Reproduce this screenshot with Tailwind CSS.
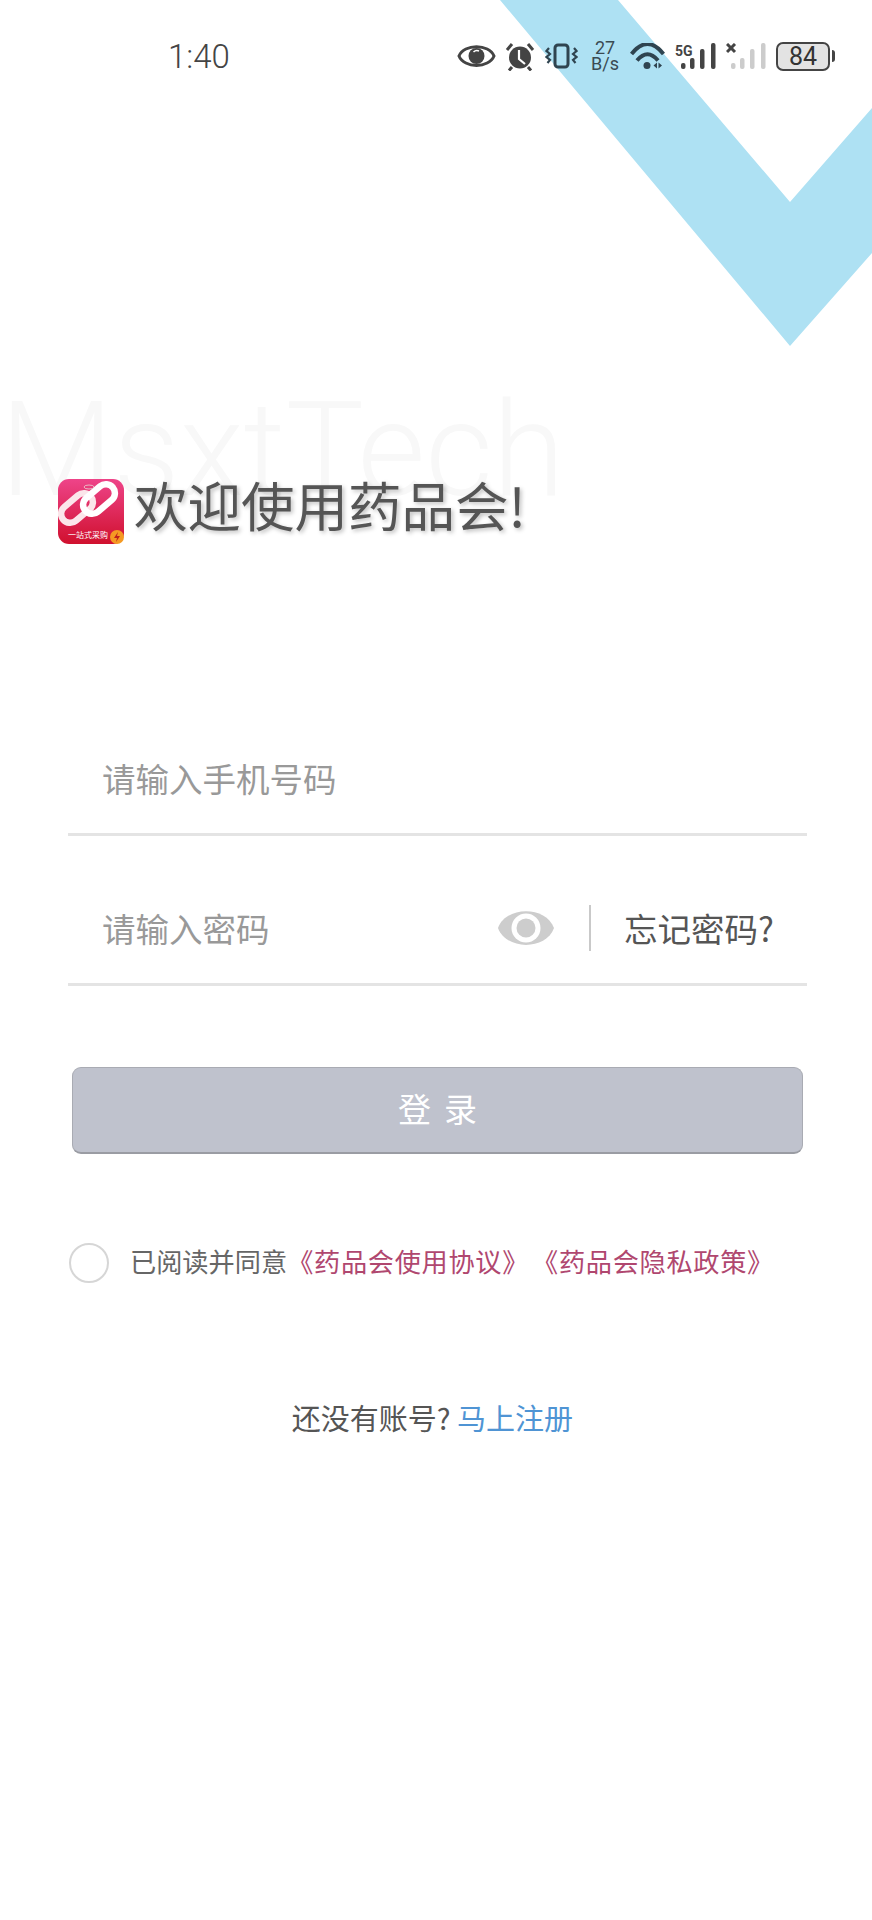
<!DOCTYPE html>
<html lang="zh-CN">
  <head>
    <meta charset="UTF-8" />
    <meta name="viewport" content="width=device-width, initial-scale=1.0" />
    <title>药品会</title>
    <script src="https://cdn.jsdelivr.net/npm/@tailwindcss/browser@4"></script>
  </head>
  <body>
    <div class="relative w-[872px] h-[1920px] overflow-hidden bg-white font-['Noto_Sans_CJK_SC',sans-serif] text-[#555]">
      <!-- background chevron -->
      <svg class="absolute top-0 left-0" width="872" height="360" viewBox="0 0 872 360">
        <polygon points="500,0 618,0 790,202 872,108 872,253 790,346" fill="#aee1f3" />
      </svg>
      <!-- watermark -->
      <div class="absolute left-0 top-[365px] font-['Roboto',sans-serif] font-light text-[131px] leading-[170px] text-[#f8f8f8] whitespace-nowrap">MsxtTech</div>

      <!-- status bar -->
      <div class="relative flex items-center h-[112px] pl-[168px]">
        <span class="w-[64px] font-['Roboto',sans-serif] font-light text-[33px] leading-none text-[#444]">1:40</span>
        <div class="flex items-center ml-[225px]">
          <svg width="39" height="24" viewBox="0 0 39 24">
            <path d="M2 12C7 -0.500 32 -0.500 37 12C32 24.500 7 24.500 2 12Z" fill="#fff" stroke="#444" stroke-width="3" />
            <circle cx="19.500" cy="12" r="8" fill="#444" />
            <path d="M16.500 8A5 5 0 0 1 22 7" fill="none" stroke="#fff" stroke-width="1.500" />
          </svg>
          <svg class="ml-[9px]" width="30" height="29" viewBox="0 0 30 29">
            <circle cx="15" cy="15.500" r="11" fill="#444" />
            <path d="M14 8V17L20 22" fill="none" stroke="#fff" stroke-width="2.200" />
            <path d="M2 8L7 2M28 8L23 2M7 25L4 28.500M23 25L26 28.500" fill="none" stroke="#444" stroke-width="3" />
          </svg>
          <svg class="ml-[10px]" width="33" height="26" viewBox="0 0 33 26">
            <rect x="10" y="2" width="13" height="22" rx="3" fill="none" stroke="#2f4450" stroke-width="3" />
            <path d="M4 5L1.500 8L5 11L1.500 14L5 17L2.500 20M29 5L31.500 8L28 11L31.500 14L28 17L30.500 20" fill="none" stroke="#2f4450" stroke-width="2.200" />
          </svg>
          <div class="ml-[14px] w-[26px] flex flex-col items-center font-['Roboto',sans-serif] text-[18px] leading-[16px] text-[#3a4a52]">
            <span>27</span>
            <span>B/s</span>
          </div>
          <svg class="ml-[12px]" width="35" height="27" viewBox="0 0 35 27">
            <path d="M1.500 11Q17.500 -9 33.500 11M7 17.500Q17.500 5 28 17.500" fill="none" stroke="#2f4450" stroke-width="4" />
            <circle cx="17" cy="22.500" r="3.500" fill="#2f4450" />
            <path d="M27 19.500V25.500L23.500 22.500ZM28.500 19.500V25.500L32 22.500Z" fill="#2f4450" />
          </svg>
          <svg class="ml-[10px]" width="41" height="27" viewBox="0 0 41 27">
            <text x="0" y="13" font-family="Roboto, sans-serif" font-size="14" font-weight="700" fill="#444">5G</text>
            <rect x="6" y="20" width="4.500" height="6" rx="2" fill="#444" />
            <rect x="15" y="15" width="4.500" height="11" rx="2" fill="#444" />
            <rect x="25" y="6" width="4.500" height="20" rx="2" fill="#444" />
            <rect x="36" y="0" width="4.500" height="26" rx="2" fill="#444" />
          </svg>
          <svg class="ml-[10px]" width="40" height="27" viewBox="0 0 40 27">
            <path d="M1 1L9 9M9 1L1 9" stroke="#444" stroke-width="3" />
            <rect x="5" y="20" width="4.500" height="6" rx="2" fill="#ccc" />
            <rect x="14" y="15" width="4.500" height="11" rx="2" fill="#ccc" />
            <rect x="24" y="6" width="4.500" height="20" rx="2" fill="#ccc" />
            <rect x="35" y="0" width="4.500" height="26" rx="2" fill="#ccc" />
          </svg>
          <div class="ml-[10px] w-[54px] h-[29px] flex items-center justify-center border-2 border-[#444] rounded-[7px] bg-[#e3e3e3] font-['Roboto',sans-serif] text-[25px] leading-none text-[#333]">84</div>
          <div class="ml-[2px] w-[3px] h-[12px] rounded-r bg-[#444]"></div>
        </div>
      </div>

      <div class="relative flex flex-col pt-[367px] pl-[68px] pr-[65px]">
        <!-- title -->
        <div class="flex items-center ml-[-10px]">
          <svg width="66" height="65" viewBox="0 0 66 65" font-family="'Noto Sans CJK SC', sans-serif">
            <defs>
              <linearGradient id="logoBg" x1="0" y1="0" x2="0" y2="1">
                <stop offset="0" stop-color="#ee4489" />
                <stop offset="1" stop-color="#d0102e" />
              </linearGradient>
            </defs>
            <rect width="66" height="65" rx="11" fill="url(#logoBg)" />
            <rect x="1" y="20" width="36" height="18" rx="9" fill="none" stroke="#fbe6ea" stroke-width="6.500" transform="rotate(-40 19 29)" />
            <rect x="23" y="11" width="36" height="18" rx="9" fill="none" stroke="#fff" stroke-width="6.500" transform="rotate(-40 41 20)" />
            <ellipse cx="31" cy="8" rx="5" ry="2" fill="none" stroke="#e9b9c4" stroke-width="1" />
            <text x="10" y="59" font-size="8" fill="#fff">一站式采购</text>
            <circle cx="59" cy="58" r="7" fill="#f59a23" />
            <path d="M60 53L56 59H59L58 63L62 57H59Z" fill="#c0201c" />
          </svg>
          <h1 class="ml-[10px] h-[65px] text-[53.5px] leading-[50px] font-normal text-[#555] [text-shadow:2px_2px_4px_rgba(0,0,0,0.25)]">欢迎使用药品会!</h1>
        </div>

        <!-- form -->
        <form class="flex flex-col mt-[142px]">
          <div class="flex items-center h-[150px] pt-[36px] pl-[34px] border-b-[3px] border-[#e4e4e4]">
            <input type="text" placeholder="请输入手机号码" class="flex-1 min-w-0 text-[33.500px] leading-[46px] outline-none bg-transparent placeholder:text-[#999]" />
          </div>
          <div class="flex items-center h-[150px] pt-[36px] pl-[34px] border-b-[3px] border-[#e4e4e4]">
            <input type="password" placeholder="请输入密码" class="flex-1 min-w-0 text-[33.500px] leading-[46px] outline-none bg-transparent placeholder:text-[#999]" />
            <svg width="56" height="34" viewBox="0 0 56 34">
              <path d="M0 17C8 -5.500 48 -5.500 56 17C48 39.500 8 39.500 0 17Z" fill="#cdcdcd" />
              <circle cx="28" cy="17" r="14.500" fill="#fff" />
              <circle cx="28" cy="17" r="9.500" fill="#cdcdcd" />
            </svg>
            <div class="ml-[35px] w-[2px] h-[46px] bg-[#c9c9c9]"></div>
            <button type="button" class="ml-[33px] mr-[33px] text-[33.500px] leading-[46px] whitespace-nowrap text-[#555]">忘记密码?</button>
          </div>

          <button type="button" class="mt-[81px] mx-[4px] h-[87px] pb-[3px] pl-[13px] rounded-[9px] bg-[#bfc2cd] border border-[#a9abb3] border-b-2 border-b-[#9a9ca3] text-[33px] tracking-[13px] text-white">登录</button>

          <div class="flex items-center mt-[89px] ml-[1px]">
            <span class="w-[40px] h-[40px] rounded-full border-2 border-[#d6d6d6]"></span>
            <p class="ml-[21px] -translate-y-0.5 text-[26.200px] leading-[40px] whitespace-nowrap text-[#666]">已阅读并同意<a class="tracking-[0.7px] text-[#b0476f]">《药品会使用协议》</a><a class="ml-[16px] tracking-[0.7px] text-[#b0476f]">《药品会隐私政策》</a></p>
          </div>

          <p class="mt-[114px] ml-[-10px] text-center text-[29px] leading-[40px] text-[#555]">还没有账号? <a class="text-[#4f94d4]">马上注册</a></p>
        </form>
      </div>
    </div>
  </body>
</html>
